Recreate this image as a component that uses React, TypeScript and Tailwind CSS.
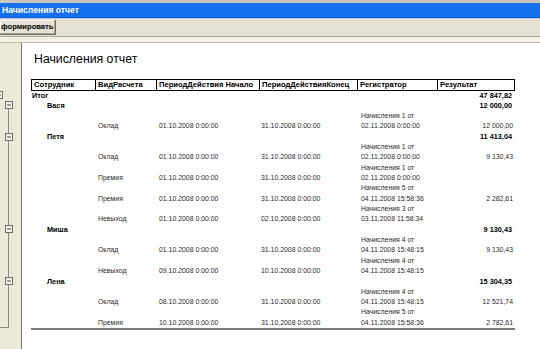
import React from "react";

type Detail = {
  kind: string;
  start: string;
  end: string;
  doc: string;
  docDate: string;
  sum?: string;
};

type Person = {
  name: string;
  total: string;
  rows: Detail[];
};

const people: Person[] = [
  {
    name: "Вася",
    total: "12 000,00",
    rows: [
      { kind: "Оклад", start: "01.10.2008 0:00:00", end: "31.10.2008 0:00:00", doc: "Начисления 1 от", docDate: "02.11.2008 0:00:00", sum: "12 000,00" },
    ],
  },
  {
    name: "Петя",
    total: "11 413,04",
    rows: [
      { kind: "Оклад", start: "01.10.2008 0:00:00", end: "31.10.2008 0:00:00", doc: "Начисления 1 от", docDate: "02.11.2008 0:00:00", sum: "9 130,43" },
      { kind: "Премия", start: "01.10.2008 0:00:00", end: "31.10.2008 0:00:00", doc: "Начисления 1 от", docDate: "02.11.2008 0:00:00" },
      { kind: "Премия", start: "01.10.2008 0:00:00", end: "31.10.2008 0:00:00", doc: "Начисления 5 от", docDate: "04.11.2008 15:58:36", sum: "2 282,61" },
      { kind: "Невыход", start: "01.10.2008 0:00:00", end: "02.10.2008 0:00:00", doc: "Начисления 3 от", docDate: "03.11.2008 11:58:34" },
    ],
  },
  {
    name: "Миша",
    total: "9 130,43",
    rows: [
      { kind: "Оклад", start: "01.10.2008 0:00:00", end: "31.10.2008 0:00:00", doc: "Начисления 4 от", docDate: "04.11.2008 15:48:15", sum: "9 130,43" },
      { kind: "Невыход", start: "09.10.2008 0:00:00", end: "10.10.2008 0:00:00", doc: "Начисления 4 от", docDate: "04.11.2008 15:48:15" },
    ],
  },
  {
    name: "Лена",
    total: "15 304,35",
    rows: [
      { kind: "Оклад", start: "08.10.2008 0:00:00", end: "31.10.2008 0:00:00", doc: "Начисления 4 от", docDate: "04.11.2008 15:48:15", sum: "12 521,74" },
      { kind: "Премия", start: "10.10.2008 0:00:00", end: "31.10.2008 0:00:00", doc: "Начисления 5 от", docDate: "04.11.2008 15:58:36", sum: "2 782,61" },
    ],
  },
];

const columns = ["Сотрудник", "ВидРасчета", "ПериодДействия Начало", "ПериодДействияКонец", "Регистратор", "Результат"];

const grid = "grid grid-cols-[64px_61px_103px_98px_80px_78px]";

// group boxes in the left margin (y relative to the panel top)
const boxes = [52, 62, 94, 186, 238];

function Tree() {
  return (
    <svg width="21" height="306" viewBox="0 0 21 306" className="block">
      <line x1="8.5" y1="66" x2="8.5" y2="284.5" stroke="#8c8a80" />
      <line x1="0" y1="284.5" x2="8.5" y2="284.5" stroke="#8c8a80" />
      {boxes.map((y, i) => {
        const x = i === 0 ? -4.5 : 5.5;
        return (
          <g key={y}>
            <rect x={x} y={y - 3.5} width="7" height="7" fill="#f4f2ea" stroke="#6f6d66" />
            <line x1={x + 1.5} y1={y} x2={x + 5.5} y2={y} stroke="#4a4a44" />
          </g>
        );
      })}
    </svg>
  );
}

export default function App() {
  return (
    <div className="w-[540px] h-[349px] overflow-hidden bg-white flex flex-col font-['Liberation_Sans',Arial,sans-serif]">
      {/* window caption */}
      <div className="h-[3px] bg-[#c9c5ba]" />
      <div className="h-[15px] bg-[#1570ef] border-b border-[#0f5ed0] flex items-center pl-[2px] text-white font-bold text-[8.6px] leading-none">
        Начисления отчет
      </div>
      <div className="h-px bg-[#c4c8ee]" />

      {/* toolbar */}
      <div className="h-[17px] bg-[#e4e0d4] flex items-start pt-px">
        <div className="h-[15px] w-[56px] flex items-center pl-px border-r border-b border-[#6e6b60] shadow-[inset_-1px_-1px_0_#a8a496,inset_1px_1px_0_#ffffff] text-black font-bold text-[7.6px] leading-none whitespace-nowrap">
          формировать
        </div>
      </div>
      <div className="h-px bg-[#a8a496]" />
      <div className="h-[5px] bg-[#f6efe2]" />
      <div className="h-px bg-[#bdb8aa]" />

      <div className="flex flex-1 min-h-0">
        <div className="w-[22px] shrink-0 bg-[#ece9d8] border-r border-[#7c7a70] overflow-hidden">
          <Tree />
        </div>

        <div className="flex-1 pl-[9px] pt-[9px]">
          <div className="text-[12.3px] leading-[14px] text-black pl-[3px]">Начисления отчет</div>

          <div className="mt-[13px] w-[484px]">
            {/* header */}
            <div className={`${grid} h-[12px] border border-black`}>
              {columns.map((c, i) => (
                <div
                  key={c}
                  className={`flex items-center pl-[2px] text-[7.6px] font-bold text-black leading-none whitespace-nowrap overflow-hidden ${i < columns.length - 1 ? "border-r border-black" : ""}`}
                >
                  {c}
                </div>
              ))}
            </div>

            {/* grand total */}
            <div className={`${grid} h-[9.5px] items-center`}>
              <div className="pl-px text-[7.3px] font-bold text-black leading-none">Итог</div>
              <div className="col-start-6 text-right pr-[3px] text-[7.3px] font-bold text-black leading-none">47 847,82</div>
            </div>

            {people.map((p) => (
              <React.Fragment key={p.name}>
                <div className={`${grid} h-[10.5px] items-center`}>
                  <div className="pl-[16px] text-[7.3px] font-bold text-black leading-none">{p.name}</div>
                  <div className="col-start-6 text-right pr-[3px] text-[7.3px] font-bold text-black leading-none">{p.total}</div>
                </div>
                {p.rows.map((r, i) => (
                  <div key={i} className={`${grid} h-[20.6px] text-[6.9px] leading-[10.3px] text-[#2a2a2a]`}>
                    <div />
                    <div className="self-end pl-[3px] whitespace-nowrap">{r.kind}</div>
                    <div className="self-end pl-[3px] whitespace-nowrap">{r.start}</div>
                    <div className="self-end pl-[2px] whitespace-nowrap">{r.end}</div>
                    <div className="flex flex-col pl-[4px] whitespace-nowrap">
                      <span>{r.doc}</span>
                      <span>{r.docDate}</span>
                    </div>
                    <div className="self-end text-right pr-[2px] whitespace-nowrap">{r.sum ?? ""}</div>
                  </div>
                ))}
              </React.Fragment>
            ))}

            <div className="h-[2px] bg-[#7b7b7b]" />
          </div>
        </div>
      </div>
    </div>
  );
}
